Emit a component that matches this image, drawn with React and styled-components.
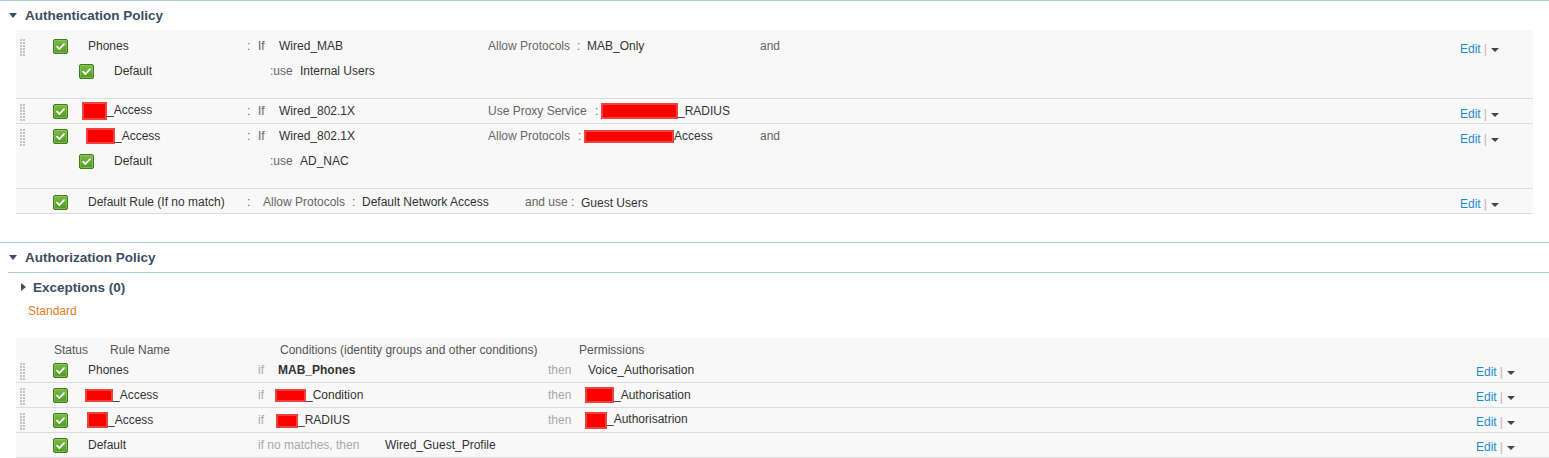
import React from "react"
import styled, { createGlobalStyle } from "styled-components"

const Global = createGlobalStyle`
  body {
    margin: 0;
    background: #ffffff;
    font-family: "Liberation Sans", Arial, sans-serif;
    font-size: 12px;
    color: #333333;
  }
`

const Page = styled.div`
  width: 1549px;
`

const SectionHead = styled.div`
  display: flex;
  align-items: center;
  height: 29px;
  padding-left: 9px;
  border-top: 1px solid #a9cbd4;
  font-size: 13.5px;
  font-weight: bold;
  color: #3b4d62;
  margin-top: ${p => p.$mt || 0}px;
`

const DownCaret = styled.span`
  width: 0;
  height: 0;
  border-left: 4px solid transparent;
  border-right: 4px solid transparent;
  border-top: 5px solid #3b4d62;
  margin-right: 8px;
`

const RightCaret = styled.span`
  width: 0;
  height: 0;
  border-top: 4px solid transparent;
  border-bottom: 4px solid transparent;
  border-left: 5px solid #3b4d62;
  margin-right: 7px;
`

const HeadRule = styled.div`
  margin-left: 8px;
  border-top: 1px solid #a9cbd4;
`

const Exceptions = styled.div`
  display: flex;
  align-items: center;
  height: 28px;
  padding-left: 21px;
  font-size: 13.5px;
  font-weight: bold;
  color: #3b4d62;
`

const Standard = styled.div`
  height: 20px;
  line-height: 20px;
  padding-left: 28px;
  color: #e27b1e;
  margin-bottom: 17px;
`

const Table = styled.div`
  margin-left: 16px;
  width: ${p => p.$w}px;
  background: #f8f8f8;
  padding-top: ${p => p.$pt || 0}px;
`

const Row = styled.div`
  padding: ${p => p.$pt ?? 4}px 0 ${p => p.$pb ?? 4}px;
  border-bottom: ${p => (p.$plain ? "none" : "1px solid #dcdcdc")};
`

const Line = styled.div`
  display: flex;
  align-items: center;
  height: 16px;
  margin-top: ${p => p.$mt || 0}px;
`

const Cell = styled.div`
  flex: none;
  width: ${p => (p.$w ? `${p.$w}px` : "auto")};
  white-space: nowrap;
  line-height: 16px;
  color: ${p =>
    p.$tone === "label" ? "#666666" : p.$tone === "faint" ? "#a8a8a8" : p.$tone === "head" ? "#555555" : "#333333"};
  font-weight: ${p => (p.$bold ? "bold" : "normal")};
  margin-top: ${p => p.$dy || 0}px;
`

const CheckCell = styled.div`
  flex: none;
  width: 35px;
  height: 15px;
  align-self: flex-start;
  margin-top: 1px;
  & > svg {
    display: block;
  }
`

const HandleCell = styled.div`
  flex: none;
  width: 37px;
  height: 16px;
  padding-left: 4px;
  box-sizing: border-box;
  display: flex;
  align-items: center;
`

const Redact = styled.span`
  display: inline-block;
  box-sizing: border-box;
  width: ${p => p.$w}px;
  height: ${p => p.$h}px;
  margin-left: ${p => p.$ml || 0}px;
  background: #ff0000;
  border: 2px solid #e8453f;
  vertical-align: middle;
`

const EditBox = styled.div`
  flex: none;
  margin-left: auto;
  width: 73px;
  align-self: flex-start;
  margin-top: ${p => p.$dy}px;
  height: 16px;
  display: flex;
  align-items: center;
  white-space: nowrap;
`

const EditLink = styled.a`
  color: #1a8ccf;
  text-decoration: none;
`

const Bar = styled.span`
  color: #c4b4ac;
  margin: 0 4px 0 3px;
`

const MenuCaret = styled.span`
  width: 0;
  height: 0;
  border-left: 4px solid transparent;
  border-right: 4px solid transparent;
  border-top: 4px solid #444444;
  margin-top: 1px;
`

function Handle() {
  const dots = []
  for (let r = 0; r < 6; r++) {
    for (let c = 0; c < 2; c++) {
      dots.push(<rect key={`${r}-${c}`} x={c * 3} y={r * 3} width="2" height="2" fill="#c2c2c2" />)
    }
  }
  return (
    <svg width="5" height="17" viewBox="0 0 5 17" style={{ marginTop: 2 }}>
      {dots}
    </svg>
  )
}

function Check() {
  return (
    <CheckCell>
      <svg width="15" height="15" viewBox="0 0 15 15">
        <defs>
          <linearGradient id="cbg" x1="0" y1="0" x2="0" y2="1">
            <stop offset="0" stopColor="#7dbb45" />
            <stop offset="1" stopColor="#4f9a22" />
          </linearGradient>
        </defs>
        <rect x="0.5" y="0.5" width="14" height="14" rx="1.5" fill="url(#cbg)" stroke="#3d7d1b" />
        <rect x="1.5" y="1.5" width="12" height="12" rx="1" fill="none" stroke="#98cc6a" strokeOpacity="0.6" />
        <path d="M4 7.6 L6.4 10 L11 5.2" fill="none" stroke="#ffffff" strokeWidth="1.8" strokeLinecap="round" strokeLinejoin="round" />
      </svg>
    </CheckCell>
  )
}

function Edit({ dy }) {
  return (
    <EditBox $dy={dy}>
      <EditLink href="#">Edit</EditLink>
      <Bar>|</Bar>
      <MenuCaret />
    </EditBox>
  )
}

function NestedDefault({ value }) {
  return (
    <Line $mt={9}>
      <Cell $w={63} />
      <Check />
      <Cell $w={156}>Default</Cell>
      <Cell $w={30} $tone="label">:use</Cell>
      <Cell>{value}</Cell>
    </Line>
  )
}

function AuthenticationTable() {
  return (
    <Table $w={1517} $pt={4}>
      <Row $pb={19}>
        <Line>
          <HandleCell><Handle /></HandleCell>
          <Check />
          <Cell $w={159}>Phones</Cell>
          <Cell $w={11} $tone="label">:</Cell>
          <Cell $w={21} $tone="label">If</Cell>
          <Cell $w={209}>Wired_MAB</Cell>
          <Cell $w={89} $tone="label">Allow Protocols</Cell>
          <Cell $w={10} $tone="label">:</Cell>
          <Cell $w={173}>MAB_Only</Cell>
          <Cell $tone="label">and</Cell>
          <Edit dy={3} />
        </Line>
        <NestedDefault value="Internal Users" />
      </Row>
      <Row>
        <Line>
          <HandleCell><Handle /></HandleCell>
          <Check />
          <Cell $w={159}><Redact $w={25} $h={18} $ml={-6} />_Access</Cell>
          <Cell $w={11} $tone="label">:</Cell>
          <Cell $w={21} $tone="label">If</Cell>
          <Cell $w={209}>Wired_802.1X</Cell>
          <Cell $w={107} $tone="label">Use Proxy Service</Cell>
          <Cell $w={6} $tone="label">:</Cell>
          <Cell><Redact $w={77} $h={16} />_RADIUS</Cell>
          <Edit dy={3} />
        </Line>
      </Row>
      <Row $pb={19}>
        <Line>
          <HandleCell><Handle /></HandleCell>
          <Check />
          <Cell $w={159}><Redact $w={29} $h={16} $ml={-2} />_Access</Cell>
          <Cell $w={11} $tone="label">:</Cell>
          <Cell $w={21} $tone="label">If</Cell>
          <Cell $w={209}>Wired_802.1X</Cell>
          <Cell $w={90} $tone="label">Allow Protocols</Cell>
          <Cell $w={6} $tone="label">:</Cell>
          <Cell $w={176}><Redact $w={90} $h={13} />Access</Cell>
          <Cell $tone="label">and</Cell>
          <Edit dy={3} />
        </Line>
        <NestedDefault value="AD_NAC" />
      </Row>
      <Row $pt={5} $pb={3}>
        <Line>
          <Cell $w={37} />
          <Check />
          <Cell $w={159}>Default Rule (If no match)</Cell>
          <Cell $w={16} $tone="label">:</Cell>
          <Cell $w={89} $tone="label">Allow Protocols</Cell>
          <Cell $w={10} $tone="label">:</Cell>
          <Cell $w={163}>Default Network Access</Cell>
          <Cell $w={56} $tone="label">and use :</Cell>
          <Cell $dy={2}>Guest Users</Cell>
          <Edit dy={2} />
        </Line>
      </Row>
    </Table>
  )
}

const authorizationRules = [
  {
    name: "Phones",
    cond: <Cell $w={270} $bold>MAB_Phones</Cell>,
    perm: "Voice_Authorisation",
  },
  {
    name: <><Redact $w={28} $h={13} $ml={-3} />_Access</>,
    cond: <Cell $w={270}><Redact $w={31} $h={13} $ml={-3} />_Condition</Cell>,
    perm: <><Redact $w={29} $h={16} $ml={-3} />_Authorisation</>,
  },
  {
    name: <><Redact $w={21} $h={16} $ml={-1} />_Access</>,
    cond: <Cell $w={270}><Redact $w={22} $h={14} $ml={-2} />_RADIUS</Cell>,
    perm: <><Redact $w={22} $h={17} $ml={-3} />_Authorisatrion</>,
  },
]

function AuthorizationTable() {
  return (
    <Table $w={1533}>
      <Row $pt={4} $pb={0} $plain>
        <Line>
          <Cell $w={38} />
          <Cell $w={56} $tone="head">Status</Cell>
          <Cell $w={170} $tone="head">Rule Name</Cell>
          <Cell $w={299} $tone="head">Conditions (identity groups and other conditions)</Cell>
          <Cell $tone="head">Permissions</Cell>
        </Line>
      </Row>
      {authorizationRules.map((r, i) => (
        <Row key={i}>
          <Line>
            <HandleCell><Handle /></HandleCell>
            <Check />
            <Cell $w={170}>{r.name}</Cell>
            <Cell $w={20} $tone="faint">if</Cell>
            {r.cond}
            <Cell $w={40} $tone="faint">then</Cell>
            <Cell>{r.perm}</Cell>
            <Edit dy={2} />
          </Line>
        </Row>
      ))}
      <Row>
        <Line>
          <Cell $w={37} />
          <Check />
          <Cell $w={170}>Default</Cell>
          <Cell $w={127} $tone="faint">if no matches, then</Cell>
          <Cell>Wired_Guest_Profile</Cell>
          <Edit dy={2} />
        </Line>
      </Row>
    </Table>
  )
}

export default function App() {
  return (
    <Page>
      <Global />
      <SectionHead>
        <DownCaret />
        Authentication Policy
      </SectionHead>
      <AuthenticationTable />

      <SectionHead $mt={28}>
        <DownCaret />
        Authorization Policy
      </SectionHead>
      <HeadRule />
      <Exceptions>
        <RightCaret />
        Exceptions (0)
      </Exceptions>
      <Standard>Standard</Standard>
      <AuthorizationTable />
    </Page>
  )
}
